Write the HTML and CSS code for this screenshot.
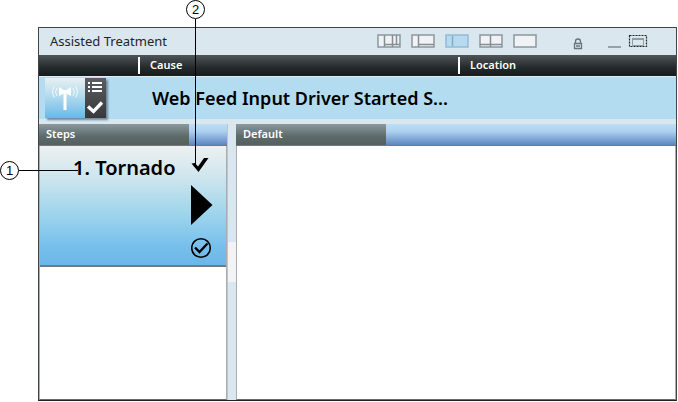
FILE: index.html
```html
<!DOCTYPE html>
<html lang="en">
<head>
<meta charset="utf-8">
<title>Assisted Treatment</title>
<link rel="stylesheet" href="styles.css">
</head>
<body>
<main class="figure">
  <section class="window">
    <header class="titlebar">
      <h1 class="title">Assisted Treatment</h1>
      <div class="layouts">
        <button class="tool" aria-label="Three column layout"><svg width="24" height="14" viewBox="0 0 24 14"><rect x="1" y="1" width="22" height="12" class="frame"/><path class="rule" d="M7.500 1V13M15.500 1V10M19.500 1V10M7.500 10.500H23M15.500 10V13"/></svg></button>
        <button class="tool" aria-label="Side and bottom layout"><svg width="24" height="14" viewBox="0 0 24 14"><rect x="1" y="1" width="22" height="12" class="frame"/><path class="rule" d="M7.500 1V13M7.500 10.500H23"/></svg></button>
        <button class="tool" aria-label="Side layout" aria-pressed="true"><svg width="24" height="14" viewBox="0 0 24 14"><rect x="1" y="1" width="22" height="12" class="frame active"/><path class="rule active" d="M7.500 2V12"/></svg></button>
        <button class="tool" aria-label="Grid layout"><svg width="24" height="14" viewBox="0 0 24 14"><rect x="1" y="1" width="22" height="12" class="frame"/><path class="rule" d="M11.500 1V13M1 10.500H23"/></svg></button>
        <button class="tool" aria-label="Single layout"><svg width="24" height="14" viewBox="0 0 24 14"><rect x="1" y="1" width="22" height="12" class="frame"/></svg></button>
      </div>
      <div class="controls">
        <button class="tool lock" aria-label="Lock"><svg width="10" height="12" viewBox="0 0 10 12"><path d="M2.500 5V3.500a2.500 2.500 0 0 1 5 0V5M1.500 5.500h7v5h-7zM3 8h4" fill="none" stroke="#69737a" stroke-width="1.300"/></svg></button>
        <button class="tool" aria-label="Minimize"><svg width="14" height="14" viewBox="0 0 14 14"><path d="M0 13H13" stroke="#97a1a9" stroke-width="2"/></svg></button>
        <button class="tool" aria-label="Restore"><svg width="20" height="14" viewBox="0 0 20 14"><rect x="1.500" y="1.500" width="17" height="11" fill="none" stroke="#20262a" stroke-width="1.200" stroke-dasharray="2 1"/><path d="M4.500 5V11.500H15.500V5" fill="none" stroke="#929ba2"/><path d="M4 5H16" stroke="#929ba2" stroke-width="2"/></svg></button>
      </div>
    </header>
    <div class="columns">
      <span></span>
      <span class="column">Cause</span>
      <span class="column">Location</span>
    </div>
    <div class="banner">
      <svg class="alarm" width="61" height="40" viewBox="0 0 61 40">
        <defs>
          <linearGradient id="sky" x1="0" y1="0" x2="0" y2="1"><stop offset="0" stop-color="#e8eff2"/><stop offset=".45" stop-color="#b3dbee"/><stop offset="1" stop-color="#6bb8e9"/></linearGradient>
          <linearGradient id="slate" x1="0" y1="0" x2="0" y2="1"><stop offset="0" stop-color="#5c5d61"/><stop offset="1" stop-color="#36383b"/></linearGradient>
        </defs>
        <path fill="url(#sky)" d="M0 0H40V40H0z"/>
        <path fill="url(#slate)" d="M40 0H61V40H40z"/>
        <path fill="#fff" d="M14 9L18.500 12H21.500L26 9V18L21.500 15.500V32H18.500V15.500L14 18z"/>
        <path fill="none" stroke="#fff" stroke-opacity=".8" d="M12 10q-3 4 0 8M9.500 8.500q-4 5 0 11M28 10q3 4 0 8M30.500 8.500q4 5 0 11"/>
        <path fill="#fff" d="M43 4h2v2h-2zM47 4h10v2h-10zM43 8h2v2h-2zM47 8h10v2h-10zM43 12h2v2h-2zM47 12h10v2h-10z"/>
        <path fill="none" stroke="#fff" stroke-width="3.300" d="M43 28.500L48.500 33.500L57 24.500"/>
      </svg>
      <h2 class="headline">Web Feed Input Driver Started S...</h2>
    </div>
    <div class="workspace">
      <section class="panel">
        <div class="tabs"><h3 class="tab">Steps</h3></div>
        <div class="body">
          <article class="step">
            <h4 class="name">1. Tornado</h4>
            <div class="actions">
              <svg class="check" width="18" height="16" viewBox="0 0 18 16"><path d="M0.500 6.500L4 6L7 9.500L13 1H17.500L7.500 15z"/></svg>
              <button class="tool" aria-label="Run step"><svg width="22" height="40" viewBox="0 0 22 40"><path d="M0 0L21.500 20L0 40z"/></svg></button>
              <button class="tool" aria-label="Complete step"><svg width="22" height="22" viewBox="0 0 22 22"><circle cx="10" cy="11" r="9.300" fill="none" stroke="#000" stroke-width="1.600"/><path d="M4 10.500L8.500 15L16.500 6.500" fill="none" stroke="#000" stroke-width="2.400"/></svg></button>
            </div>
          </article>
        </div>
      </section>
      <div class="splitter"><span class="grip"></span></div>
      <section class="panel">
        <div class="tabs"><h3 class="tab">Default</h3></div>
        <div class="body"></div>
      </section>
    </div>
  </section>
  <div class="callout one"><span class="number">1</span><span class="leader"></span></div>
  <div class="callout two"><span class="number">2</span><span class="leader"></span></div>
</main>
</body>
</html>
```
FILE: styles.css
```css
* { box-sizing: border-box; }

body {
  margin: 0;
  background: #fff;
  color: #000;
  font-family: "Noto Sans", "Open Sans", sans-serif;
}

h1, h2, h3, h4 { margin: 0; }

.figure {
  position: relative;
  display: flex;
  min-height: 100vh;
  padding: 27px 1px 1px 38px;
}

.window {
  flex: 1;
  display: flex;
  flex-direction: column;
  min-width: 0;
  border: 1px solid #424548;
  border-bottom-color: #202224;
  background: #dae7ef;
}

.titlebar {
  display: flex;
  align-items: center;
  height: 27px;
  padding: 0 28px 2px 11px;
}

.title {
  flex: 1;
  font-size: 13px;
  line-height: 24px;
  font-weight: 400;
  color: #1d252b;
}

.tool {
  display: block;
  padding: 0;
  border: 0;
  background: none;
  line-height: 0;
}

.tool svg, .alarm, .check { display: block; }

.layouts { display: flex; gap: 10px; }

.controls {
  display: flex;
  align-items: center;
  gap: 6px;
  margin-left: 36px;
}

.lock { margin: 6px 19px 0 0; }

.frame { fill: #f1f2f5; stroke: #8d969d; stroke-width: 1.5; }
.rule { fill: none; stroke: #848e95; stroke-width: 1.5; }
.frame.active { fill: #b7daef; stroke: #91bbd7; }
.rule.active { stroke: #83acc7; }

.columns {
  display: grid;
  grid-template-columns: 99px 320fr 218fr;
  height: 21px;
  padding: 2px 0;
  background: linear-gradient(#505657, #24292a 60%, #171b1c);
}

.column {
  padding-left: 10px;
  border-left: 2px solid #fff;
  color: #fff;
  font-size: 11px;
  line-height: 16px;
  font-weight: 600;
}

.banner {
  display: flex;
  align-items: center;
  gap: 46px;
  height: 43px;
  padding: 0 6px;
  border-top: 1px solid #e0edf4;
  background: #b3dcf0;
}

.alarm { box-shadow: 2px 2px 2px #6e899b; }

.headline {
  font-size: 18px;
  line-height: 40px;
  font-weight: 600;
}

.workspace {
  flex: 1;
  display: grid;
  grid-template-columns: 188px 9px 1fr;
  padding-top: 5px;
}

.panel {
  display: flex;
  flex-direction: column;
  min-width: 0;
}

.tabs {
  height: 22px;
  border-bottom: 1px solid #75797e;
  background: linear-gradient(#bfdef3, #acd1ef 35%, #5d86c0);
}

.tab {
  width: 150px;
  height: 21px;
  padding-left: 7px;
  background: linear-gradient(#8c989e, #5c6a69 60%, #55605f);
  color: #fff;
  font-size: 11px;
  line-height: 19px;
  font-weight: 600;
}

.body {
  flex: 1;
  border: solid #a9adb1;
  border-width: 0 1px 1px;
  border-bottom-color: #686b6d;
  background: #fff;
}

.step {
  display: flex;
  justify-content: space-between;
  height: 121px;
  padding: 11px 13px 0 33px;
  border-bottom: 2px solid #74797d;
  background: linear-gradient(#edf1f1, #d0e6ee 25%, #a1d6ec 55%, #76bfec 85%, #6bb7e9);
}

.name {
  font-size: 20px;
  line-height: 22px;
  font-weight: 600;
}

.actions { display: flex; flex-direction: column; gap: 12px; }

.splitter {
  display: flex;
  align-items: center;
  border-left: 1px solid #bdc5cb;
}

.grip {
  width: 100%;
  height: 40px;
  background: #f2f3f4;
}

.callout {
  position: absolute;
  display: flex;
  align-items: center;
}

.one { left: 0; top: 161px; }
.two { left: 186px; top: 0; flex-direction: column; }

.number {
  width: 19px;
  height: 19px;
  border: 1px solid #000;
  border-radius: 50%;
  background: #fff;
  font: 13px/17px "Liberation Sans", Arial, sans-serif;
  text-align: center;
}

.leader { background: #000; }
.one .leader { width: 59px; height: 1px; }
.two .leader { width: 1px; height: 146px; }
```
